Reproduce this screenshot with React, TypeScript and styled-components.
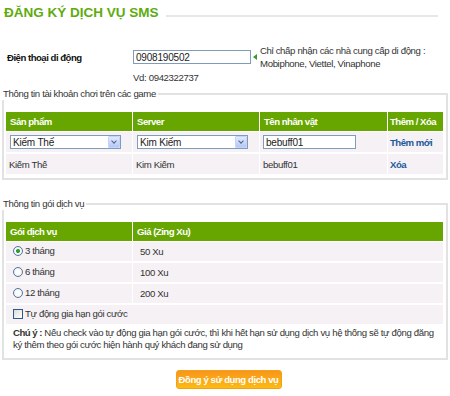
import React from "react"
import styled, { createGlobalStyle } from 'styled-components';

const accounts = [
  { product: "Kiếm Thế", server: "Kim Kiếm", name: "bebuff01" },
];

const packages = [
  { label: "3 tháng", price: "50 Xu", checked: true },
  { label: "6 tháng", price: "100 Xu", checked: false },
  { label: "12 tháng", price: "200 Xu", checked: false },
];

export default function App() {
  return (
    <>
      <GlobalStyle />
      <Page>
        <TitleBar>
          <Title>ĐĂNG KÝ DỊCH VỤ SMS</Title>
          <TitleRule />
        </TitleBar>

        <PhoneForm>
          <FieldLabel>Điện thoại di động</FieldLabel>
          <FieldControl>
            <TextInput defaultValue="0908190502" $width={118} />
            <Pointer />
            <Hint>
              Chỉ chấp nhận các nhà cung cấp di động :<br />
              Mobiphone, Viettel, Vinaphone
            </Hint>
          </FieldControl>
          <span />
          <Example>Vd: 0942322737</Example>
        </PhoneForm>

        <Group>
          <Legend>Thông tin tài khoản chơi trên các game</Legend>
          <DataTable>
            <colgroup>
              <col style={{ width: 126 }} />
              <col style={{ width: 127 }} />
              <col style={{ width: 128 }} />
              <col />
            </colgroup>
            <thead>
              <tr>
                <Th>Sản phẩm</Th>
                <Th>Server</Th>
                <Th>Tên nhân vật</Th>
                <Th $tight>Thêm / Xóa</Th>
              </tr>
            </thead>
            <tbody>
              <tr>
                <Td>
                  <SelectBox>
                    <Select defaultValue="Kiếm Thế">
                      <option>Kiếm Thế</option>
                    </Select>
                    <Arrow />
                  </SelectBox>
                </Td>
                <Td>
                  <SelectBox>
                    <Select defaultValue="Kim Kiếm">
                      <option>Kim Kiếm</option>
                    </Select>
                    <Arrow />
                  </SelectBox>
                </Td>
                <Td>
                  <TextInput defaultValue="bebuff01" $width={93} />
                </Td>
                <Td $tight><ActionLink href="#">Thêm mới</ActionLink></Td>
              </tr>
              {accounts.map((acc) => (
                <tr key={acc.name}>
                  <Td>{acc.product}</Td>
                  <Td>{acc.server}</Td>
                  <Td>{acc.name}</Td>
                  <Td $tight><ActionLink href="#">Xóa</ActionLink></Td>
                </tr>
              ))}
            </tbody>
          </DataTable>
        </Group>

        <Group $top={17}>
          <Legend>Thông tin gói dịch vụ</Legend>
          <DataTable>
            <colgroup>
              <col style={{ width: 126 }} />
              <col />
            </colgroup>
            <thead>
              <tr>
                <Th>Gói dịch vụ</Th>
                <Th>Giá (Zing Xu)</Th>
              </tr>
            </thead>
            <tbody>
              {packages.map((p) => (
                <tr key={p.label}>
                  <Td $short $inset>
                    <Choice>
                      <Radio type="radio" name="package" defaultChecked={p.checked} />
                      {p.label}
                    </Choice>
                  </Td>
                  <Td $short $inset>{p.price}</Td>
                </tr>
              ))}
              <tr>
                <Td $short $inset colSpan={2}>
                  <Choice>
                    <Check type="checkbox" />
                    Tự động gia hạn gói cước
                  </Choice>
                </Td>
              </tr>
              <tr>
                <Note colSpan={2}>
                  <b>Chú ý :</b> Nếu check vào tự động gia hạn gói cước, thì khi hết hạn sử dụng dịch vụ hệ thống sẽ tự động đăng<br />
                  ký thêm theo gói cước hiện hành quý khách đang sử dụng
                </Note>
              </tr>
            </tbody>
          </DataTable>
        </Group>

        <Actions>
          <SubmitButton type="button">Đồng ý sử dụng dịch vụ</SubmitButton>
        </Actions>
      </Page>
    </>
  );
}

const GlobalStyle = createGlobalStyle`
  html, body {
    margin: 0;
    padding: 0;
    background: #fff;
  }
  body {
    font-family: "Liberation Sans", Arial, sans-serif;
    font-size: 9.6px;
    letter-spacing: -0.35px;
    color: #333;
  }
  b {
    letter-spacing: -0.5px;
  }
`;

const Page = styled.div`
  width: 450px;
`;

const TitleBar = styled.div`
  display: flex;
  align-items: flex-end;
  padding: 4px 12px 0 4px;
`;

const Title = styled.h2`
  margin: 0;
  font-size: 13.5px;
  line-height: 17px;
  letter-spacing: 0;
  font-weight: bold;
  color: #5eab0e;
`;

const TitleRule = styled.div`
  flex: 1;
  height: 2px;
  margin: 0 0 4px 7px;
  background: #e7e7e7;
`;

const PhoneForm = styled.div`
  display: grid;
  grid-template-columns: 126px auto;
  row-gap: 1px;
  align-items: center;
  margin-top: 23px;
  padding-left: 7px;
`;

const FieldLabel = styled.b`
  color: #111;
`;

const FieldControl = styled.div`
  display: flex;
  align-items: center;
`;

const TextInput = styled.input<{ $width: number }>`
  box-sizing: border-box;
  width: ${(p) => p.$width}px;
  height: 14px;
  padding: 0 2px;
  border: 1px solid #7f9db9;
  font: inherit;
  font-size: 10px;
  letter-spacing: -0.2px;
  color: #222;
  background: #fff;
  outline: none;
`;

const Pointer = styled.span`
  width: 0;
  height: 0;
  margin: 0 3px 0 2px;
  border-top: 3px solid transparent;
  border-bottom: 3px solid transparent;
  border-right: 4px solid #3a9a2b;
`;

const Hint = styled.div`
  line-height: 13px;
  color: #333;
`;

const Example = styled.div`
  line-height: 13px;
  color: #333;
`;

const Group = styled.fieldset<{ $top?: number }>`
  margin: ${(p) => p.$top ?? 3}px 2px 0;
  padding: 12px 3px 2px 2px;
  border: 2px solid #e2e2e2;
`;

const Legend = styled.legend`
  margin-left: -4px;
  padding: 0 2px 0 1px;
  line-height: 13px;
  color: #333;
`;

const DataTable = styled.table`
  width: 100%;
  table-layout: fixed;
  border-collapse: separate;
  border-spacing: 0;
`;

const Th = styled.th<{ $tight?: boolean }>`
  height: 19px;
  padding: 0 ${(p) => (p.$tight ? 2 : 4)}px;
  background: #67a600;
  color: #fff;
  font-weight: bold;
  letter-spacing: -0.5px;
  text-align: left;
  white-space: nowrap;
  border-bottom: 1px solid #fff;
  & + & {
    border-left: 1px solid #fff;
  }
`;

const Td = styled.td<{ $tight?: boolean; $short?: boolean; $inset?: boolean }>`
  height: ${(p) => (p.$short ? 19 : 20)}px;
  padding: 0 ${(p) => (p.$tight ? 2 : p.$inset ? 7 : 3)}px;
  background: #f5f1f5;
  color: #333;
  white-space: nowrap;
  vertical-align: middle;
  border-bottom: 2px solid #fff;
  & + & {
    border-left: 1px solid #fff;
  }
`;

const SelectBox = styled.span`
  box-sizing: border-box;
  display: flex;
  width: 111px;
  height: 14px;
  margin-left: 1px;
  border: 1px solid #7f9db9;
  background: #fff;
`;

const Select = styled.select`
  flex: 1;
  min-width: 0;
  appearance: none;
  border: 0;
  padding: 0 2px;
  font: inherit;
  font-size: 10px;
  letter-spacing: -0.2px;
  color: #222;
  background: transparent;
  outline: none;
`;

const Arrow = styled.span`
  box-sizing: border-box;
  width: 12px;
  border: 1px solid #c3d3fd;
  border-radius: 1px;
  background: linear-gradient(#e1eafe, #b4c8f6);
  position: relative;
  &::after {
    content: "";
    position: absolute;
    left: 3px;
    top: 2px;
    width: 3px;
    height: 3px;
    border-right: 1.5px solid #4d6185;
    border-bottom: 1.5px solid #4d6185;
    transform: rotate(45deg);
  }
`;

const ActionLink = styled.a`
  color: #1b5a98;
  font-weight: bold;
  letter-spacing: -0.5px;
  text-decoration: none;
`;

const Choice = styled.label`
  display: inline-flex;
  align-items: center;
  gap: 2px;
`;

const Radio = styled.input`
  appearance: none;
  box-sizing: border-box;
  width: 10px;
  height: 10px;
  margin: 0;
  border: 1px solid #4f77a8;
  border-radius: 50%;
  background: radial-gradient(circle, #fff 0 2px, #e6e6e0 5px);
  &:checked {
    background: radial-gradient(circle, #2da02d 0 1.8px, #fff 2.3px, #e6e6e0 5px);
  }
`;

const Check = styled.input`
  appearance: none;
  box-sizing: border-box;
  width: 10px;
  height: 10px;
  margin: 0;
  border: 1px solid #2a5a90;
  background: linear-gradient(135deg, #dcdcd6, #fff);
`;

const Note = styled.td`
  padding: 1px 2px 5px 7px;
  line-height: 12px;
  color: #333;
`;

const Actions = styled.div`
  display: flex;
  justify-content: center;
  padding: 10px 0 0 7px;
`;

const SubmitButton = styled.button`
  width: 106px;
  height: 19px;
  padding: 0;
  border: 1px solid #f4a015;
  border-radius: 3px;
  background: linear-gradient(#f8961c, #fcbb12);
  color: #fff;
  font-family: "Liberation Sans", Arial, sans-serif;
  font-size: 9.5px;
  font-weight: bold;
  letter-spacing: -0.4px;
  cursor: pointer;
`;
